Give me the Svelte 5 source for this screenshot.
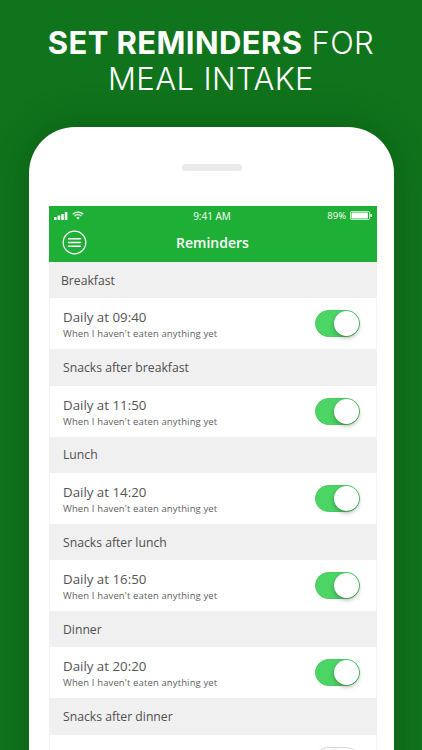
<script>
  // last row is cut by the bottom of the shot, only its toggle top shows
  const reminders = [
    { title: 'Breakfast', time: '09:40', on: true },
    { title: 'Snacks after breakfast', time: '11:50', on: true },
    { title: 'Lunch', time: '14:20', on: true },
    { title: 'Snacks after lunch', time: '16:50', on: true },
    { title: 'Dinner', time: '20:20', on: true },
    { title: 'Snacks after dinner', time: null, on: false }
  ];
</script>

<div class="page">
  <h1><b>SET REMINDERS</b> FOR<br />MEAL INTAKE</h1>

  <div class="phone">
    <div class="speaker"></div>
    <div class="screen">
      <header class="appbar">
        <div class="status">
          <div class="status-left">
            <svg width="16" height="8" viewBox="0 0 16 8">
              <rect x="0" y="5" width="2.6" height="3" rx="0.5" fill="#fff" />
              <rect x="3.6" y="3.6" width="2.6" height="4.4" rx="0.5" fill="#fff" />
              <rect x="7.2" y="2" width="2.6" height="6" rx="0.5" fill="#fff" />
              <rect x="10.8" y="0" width="2.6" height="8" rx="0.5" fill="#fff" />
            </svg>
            <svg width="12" height="9" viewBox="0 0 12 9" fill="none" stroke="#fff" stroke-width="1.2">
              <path d="M0.8 3.2a7.4 7.4 0 0 1 10.4 0" />
              <path d="M2.6 5a4.8 4.8 0 0 1 6.8 0" />
              <path d="M6 8.6 4.4 6.8a2.3 2.3 0 0 1 3.2 0Z" fill="#fff" stroke="none" />
            </svg>
          </div>
          <span class="clock">9:41 AM</span>
          <div class="status-right">
            <span>89%</span>
            <svg width="22" height="9" viewBox="0 0 22 9">
              <rect x="0.4" y="0.4" width="19.2" height="8.2" rx="1.5" fill="none" stroke="#fff" stroke-width="0.8" />
              <rect x="1.5" y="1.5" width="16.4" height="6" rx="0.6" fill="#fff" />
              <path d="M20.4 3h.5a1 1 0 0 1 0 3h-.5Z" fill="#fff" />
            </svg>
          </div>
        </div>
        <div class="nav">
          <svg class="menu" width="25" height="25" viewBox="0 0 25 25" fill="none" stroke="#fff">
            <circle cx="12.5" cy="12.5" r="11.3" stroke-width="1.2" />
            <path d="M6.5 8.7h12M6.5 12.5h12M6.5 16.3h12" stroke-width="1.5" stroke-linecap="round" />
          </svg>
          <span class="title">Reminders</span>
        </div>
      </header>

      {#each reminders as item, i}
        <div class="section" class:first={i === 0}>{item.title}</div>
        <div class="row">
          <div class="row-text">
            {#if item.time}
              <div class="row-time">Daily at {item.time}</div>
              <div class="row-sub">When I haven't eaten anything yet</div>
            {/if}
          </div>
          <div class="toggle" class:on={item.on}><div class="knob"></div></div>
        </div>
      {/each}
    </div>
  </div>
</div>

<style>
  :global(body) {
    margin: 0;
  }

  .page {
    width: 422px;
    height: 750px;
    overflow: hidden;
    background: #10741c;
    display: flex;
    flex-direction: column;
    align-items: center;
    font-family: "Open Sans", "Liberation Sans", sans-serif;
  }

  h1 {
    margin: 25px 0 0;
    width: 100%;
    height: 102px;
    flex: none;
    text-align: center;
    color: #fff;
    font-family: Inter, "Liberation Sans", sans-serif;
    font-size: 31px;
    line-height: 36px;
    font-weight: 300;
    letter-spacing: 0.4px;
  }

  h1 b {
    font-weight: 700;
  }

  .phone {
    width: 365px;
    flex: none;
    margin-left: 1px;
    background: #fff;
    border-radius: 46px 46px 0 0;
    padding-top: 37px;
    height: 640px;
    box-shadow: 0 0 40px rgba(0, 40, 5, 0.3);
    display: flex;
    flex-direction: column;
    align-items: center;
  }

  .speaker {
    width: 60px;
    height: 7px;
    border-radius: 4px;
    background: #e9e8ea;
  }

  .screen {
    width: 328px;
    margin-top: 35px;
    margin-left: 3px;
    background: #fff;
  }

  .appbar {
    height: 56px;
    background: #1eb036;
    color: #fff;
  }

  .status {
    height: 19px;
    padding: 0 5px;
    display: flex;
    align-items: center;
    justify-content: space-between;
    font-size: 9.5px;
    position: relative;
  }

  .status-left {
    display: flex;
    align-items: center;
    gap: 2px;
  }

  .clock {
    position: absolute;
    left: -2px;
    right: 0;
    text-align: center;
    font-size: 10px;
  }

  .status-right {
    display: flex;
    align-items: center;
    gap: 4px;
  }

  .nav {
    height: 37px;
    display: flex;
    align-items: center;
    justify-content: center;
    position: relative;
  }

  .menu {
    position: absolute;
    left: 13px;
    top: 5px;
  }

  .title {
    font-size: 14px;
    font-weight: 600;
    padding-bottom: 3px;
    margin-right: 1px;
  }

  .section {
    height: 36.3px;
    background: #f0f0f0;
    color: #4f4f4f;
    font-size: 12.2px;
    display: flex;
    align-items: center;
    padding-left: 14px;
    box-sizing: border-box;
  }

  .section.first {
    padding-left: 12px;
  }

  .row {
    height: 51px;
    display: flex;
    align-items: center;
    justify-content: space-between;
    padding: 0 16px 0 13px;
    box-sizing: border-box;
    border-left: 1px solid #f4f4f4;
    border-right: 1px solid #f4f4f4;
  }

  .row-text {
    padding-top: 2px;
  }

  .row-time {
    font-size: 13.3px;
    line-height: 19px;
    color: #555;
  }

  .row-sub {
    font-size: 9.5px;
    line-height: 14px;
    color: #5f5f5f;
    letter-spacing: 0.12px;
  }

  .toggle {
    width: 45px;
    height: 27px;
    border-radius: 14px;
    background: #fff;
    border: 1px solid #d8d8d8;
    box-sizing: border-box;
    position: relative;
  }

  .toggle.on {
    background: #4cd464;
    border-color: #4cc864;
  }

  .knob {
    position: absolute;
    left: 0;
    top: 0;
    width: 25px;
    height: 25px;
    border-radius: 50%;
    background: #fff;
    box-shadow: 0 2px 4px rgba(0, 0, 0, 0.3);
  }

  .toggle.on .knob {
    left: 18px;
  }
</style>
